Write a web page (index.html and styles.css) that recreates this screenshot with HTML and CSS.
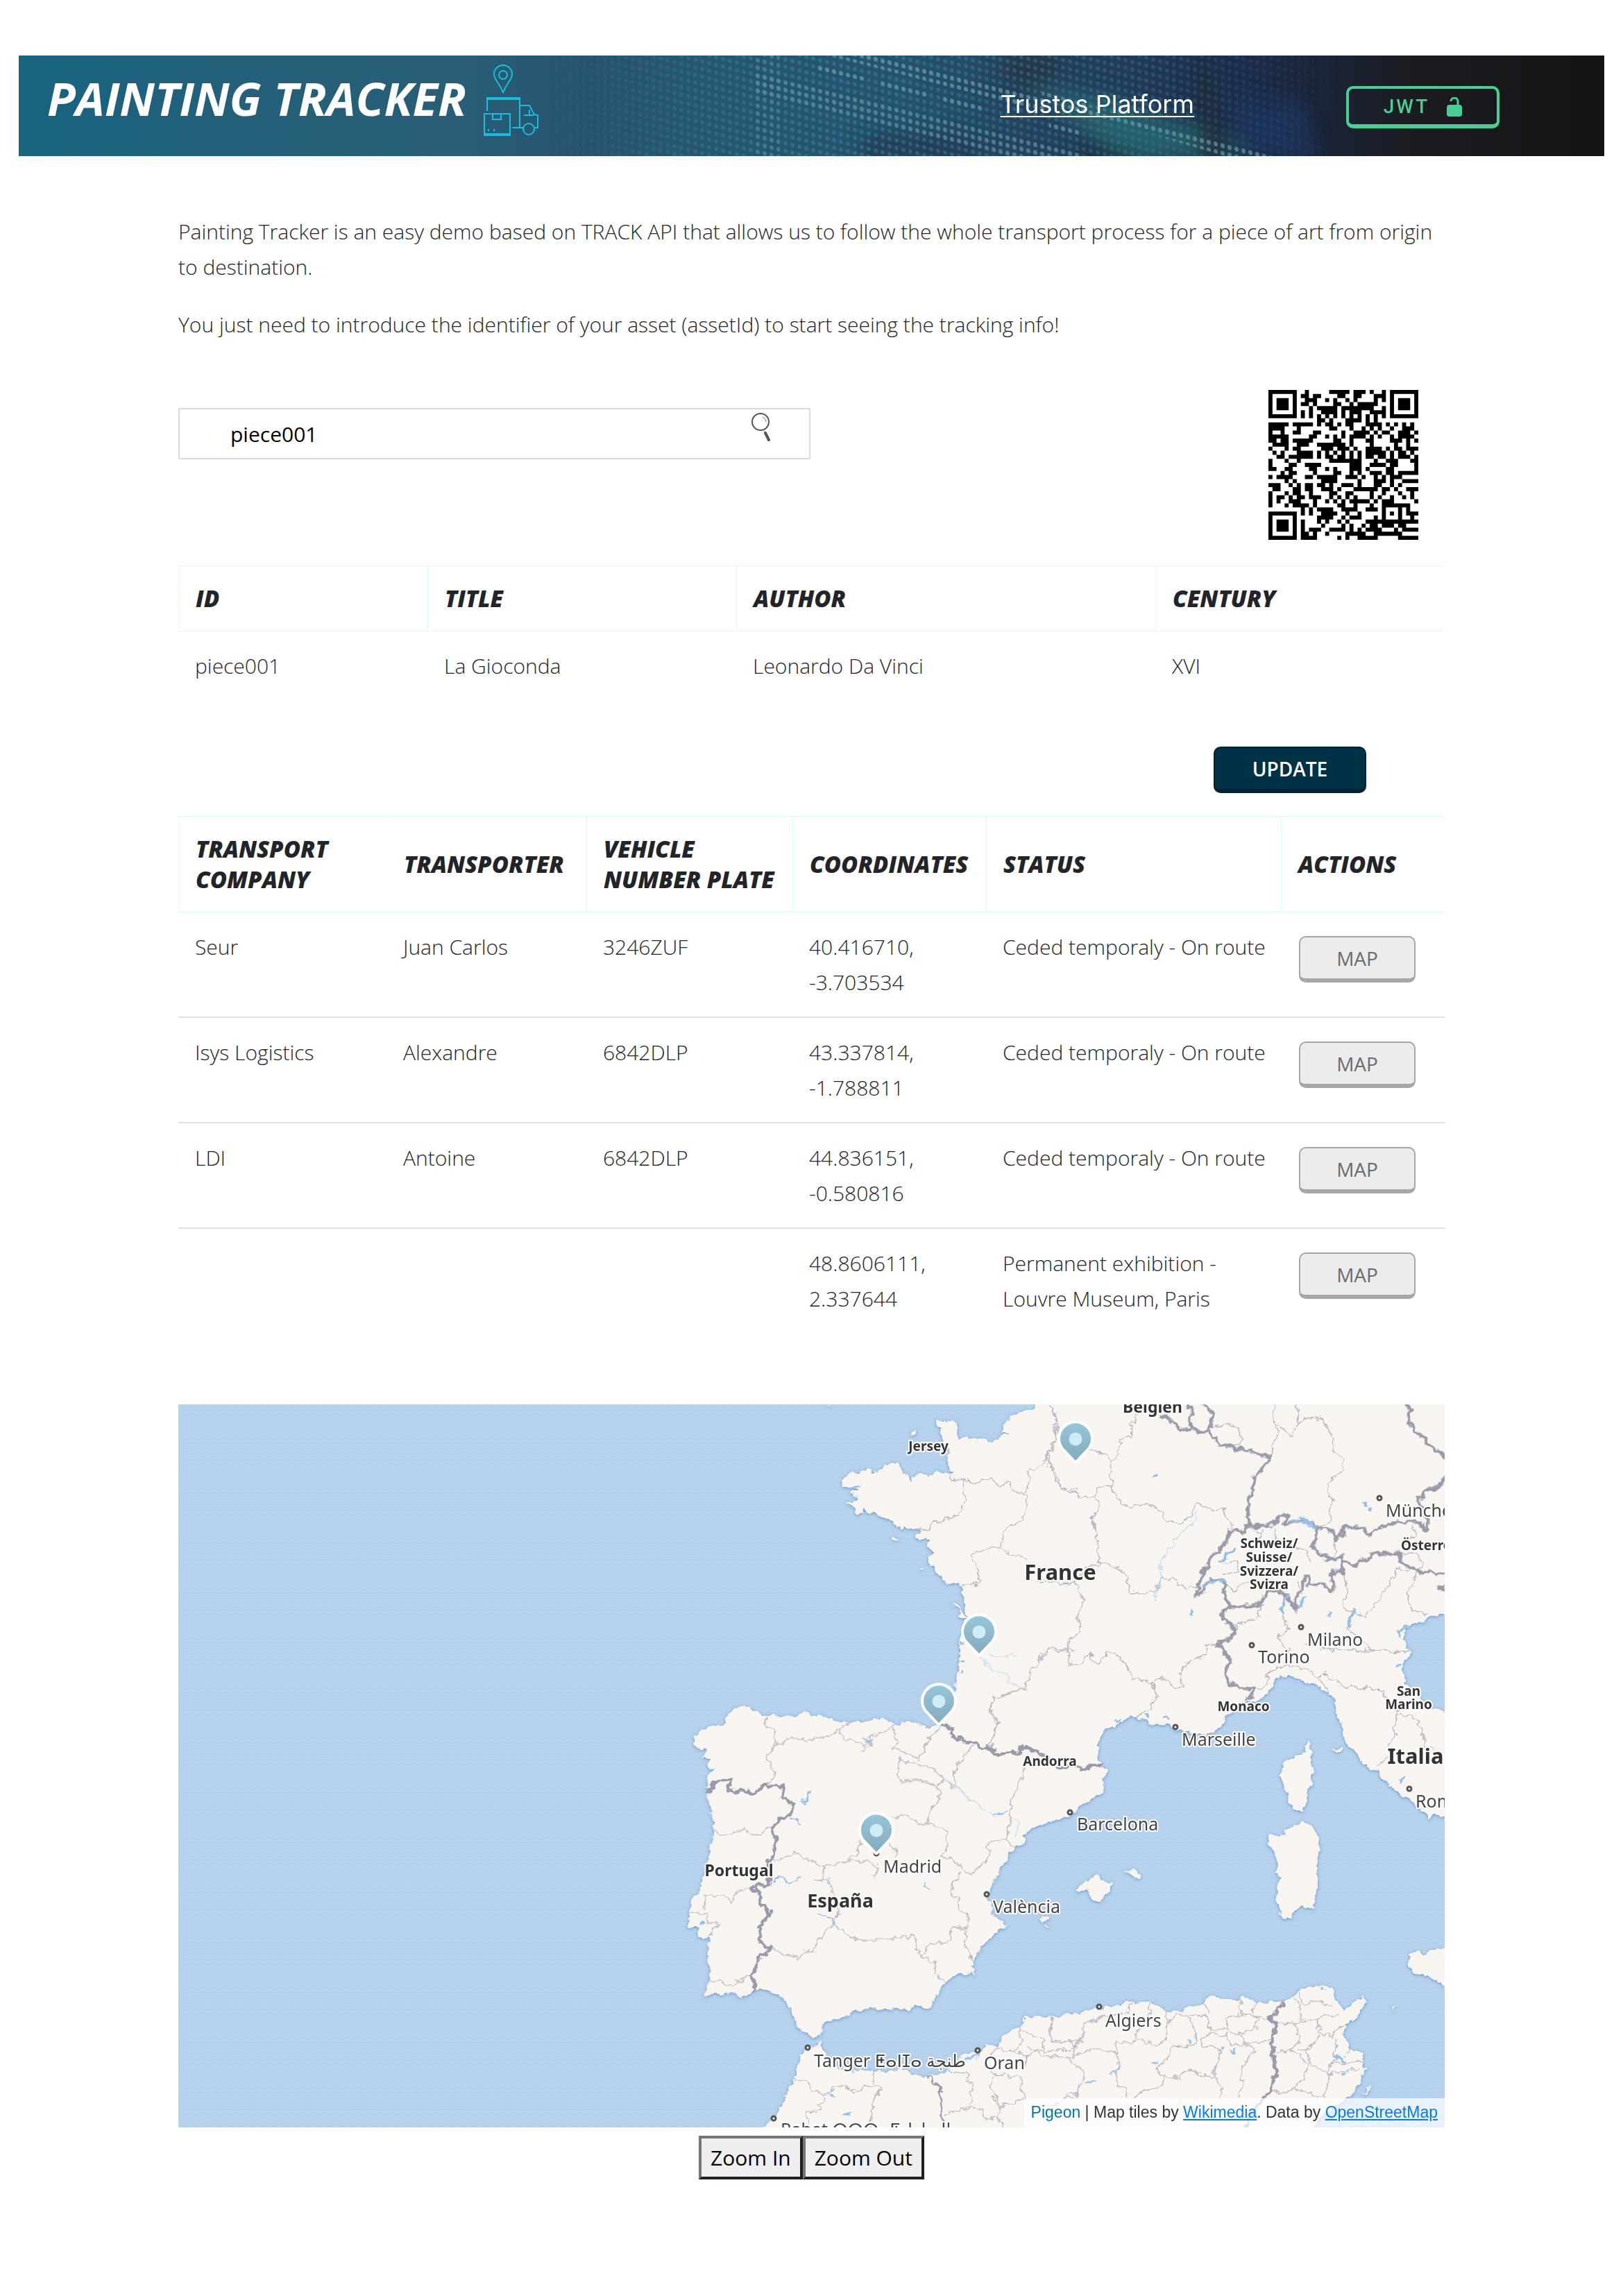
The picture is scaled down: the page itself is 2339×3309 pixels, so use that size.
FILE: index.html
```html
<!DOCTYPE html>
<html lang="en">
<head>
<meta charset="utf-8">
<title>Painting Tracker</title>
<link rel="stylesheet" href="styles.css">
</head>
<body>
<header class="topbar">
  <svg class="topbar-art" viewBox="0 0 2285 145" preserveAspectRatio="xMidYMid slice" aria-hidden="true">
    <defs>
      <linearGradient id="base"><stop offset="0" stop-color="#16647f"/><stop offset=".13" stop-color="#23607a"/><stop offset=".28" stop-color="#285e76"/><stop offset=".36" stop-color="#28536e"/><stop offset=".42" stop-color="#265772"/><stop offset=".56" stop-color="#25526f"/><stop offset=".63" stop-color="#264260"/><stop offset=".7" stop-color="#233a58"/><stop offset=".76" stop-color="#1e2f50"/><stop offset=".83" stop-color="#1b2234"/><stop offset=".88" stop-color="#1a1c20"/><stop offset="1" stop-color="#131415"/></linearGradient>
      <linearGradient id="fade"><stop offset=".32" stop-color="#000"/><stop offset=".48" stop-color="#bbb"/><stop offset=".7" stop-color="#777"/><stop offset=".84" stop-color="#000"/></linearGradient>
      <mask id="dotmask"><rect width="2285" height="145" fill="url(#fade)"/></mask>
      <pattern id="dots" width="10" height="11" patternUnits="userSpaceOnUse" patternTransform="skewY(14)"><rect x="2" y="2" width="6" height="6" rx="3" fill="#2f8598"/></pattern>
      <pattern id="bright" width="10" height="11" patternUnits="userSpaceOnUse" patternTransform="skewY(14)"><rect x="2" y="2" width="6" height="7" rx="3" fill="#6aa2a8"/></pattern>
      <filter id="soft" x="-20%" y="-50%" width="140%" height="200%"><feGaussianBlur stdDeviation="14"/></filter>
    </defs>
    <rect width="2285" height="145" fill="url(#base)"/>
    <g filter="url(#soft)">
      <path d="M1460 50L1560 60 1830 150 1600 150z" fill="#2b8580" opacity=".5"/>
      <path d="M1420 0h90l-30 50-60-10z" fill="#283443" opacity=".9"/>
      <path d="M1220 115l130 0 60 35h-200z" fill="#26344f" opacity=".8"/>
      <path d="M1530 115l120 40h-120z" fill="#232f45"/>
      <path d="M1690 0h30l30 150h-50z" fill="#23293a" opacity=".8"/>
      <path d="M1740 60l110 10 20 80h-110z" fill="#1e3158"/>
    </g>
    <rect width="2285" height="145" fill="url(#dots)" mask="url(#dotmask)" opacity=".85"/>
    <g fill="url(#bright)" opacity=".6">
      <path d="M1170 0h60l250 62v20z"/>
      <path d="M1060 26l420 100 50 10v14h-90l-380-92z" opacity=".8"/>
      <path d="M1150 12l70 16v9l-70-16zM1240 36l70 16v9l-70-16zM1330 58l60 15v9l-60-15zM1485 95l45 11v9l-45-11z"/>
      <path d="M1475 52l120 35 220 60h-70l-270-82z"/>
      <path d="M1062 0h34v145h-34z" opacity=".45"/>
    </g>
  </svg>
  <h1 class="brand">PAINTING TRACKER
    <svg class="brand-icon" viewBox="0 0 80 104" aria-hidden="true"><g fill="none" stroke="#16bfdf" stroke-width="2"><path d="M28 40C22 26 15 21 15 14a13 13 0 0 1 26 0c0 7-7 12-13 26z"/><circle cx="28" cy="15" r="6"/><path d="M5 67V48h47v43M5 50h47M52 59h14l7 13 5 1v18h-4M66 65v8M58 73h14M41 91h16"/><circle cx="65" cy="93" r="8"/><path d="M1 71h37v31H1zM1 100h37M13 71v8h12v-8"/><path d="M7 93v3M15 93v3"/></g></svg>
  </h1>
  <nav class="topnav">
    <a class="platform-link" href="#">Trustos Platform</a>
    <button class="btn btn-jwt" type="button">JWT
      <svg viewBox="0 0 22 28" aria-hidden="true"><rect y="11" width="22" height="17" rx="4" fill="#48cf93"/><path d="M6 6a5 5 0 0 1 10 0v7" fill="none" stroke="#48cf93" stroke-width="3"/></svg>
    </button>
  </nav>
</header>

<main class="content">
  <p>Painting Tracker is an easy demo based on TRACK API that allows us to follow the whole transport process for a piece of art from origin to destination.</p>
  <p>You just need to introduce the identifier of your asset (assetId) to start seeing the tracking info!</p>

  <div class="lookup">
    <form class="search">
      <input type="text" value="piece001" aria-label="Asset identifier">
      <button type="button" aria-label="Search"><svg viewBox="0 0 28 42" aria-hidden="true"><circle cx="14" cy="14" r="12" fill="none" stroke="#555" stroke-width="2"/><path d="M17 7q5 2 5 7M19 27l2 3" fill="none" stroke="#777" stroke-width="1"/><path d="M21 30l5 10" stroke="#555" stroke-width="4" stroke-linecap="round"/></svg></button>
    </form>
    <svg class="qr" viewBox="0 0 37 37" role="img" aria-label="QR code"><path id="qr-modules"/></svg>
  </div>

  <table class="grid piece">
    <colgroup><col class="c-id"><col class="c-title"><col class="c-author"><col></colgroup>
    <thead><tr><th>ID</th><th>TITLE</th><th>AUTHOR</th><th>CENTURY</th></tr></thead>
    <tbody><tr><td>piece001</td><td>La Gioconda</td><td>Leonardo Da Vinci</td><td>XVI</td></tr></tbody>
  </table>

  <div class="actions"><button class="btn btn-update" type="button">UPDATE</button></div>

  <table class="grid route">
    <colgroup><col class="c-company"><col class="c-transporter"><col class="c-plate"><col class="c-coords"><col class="c-status"><col></colgroup>
    <thead><tr><th>TRANSPORT COMPANY</th><th class="plain">TRANSPORTER</th><th>VEHICLE<br>NUMBER PLATE</th><th>COORDINATES</th><th>STATUS</th><th>ACTIONS</th></tr></thead>
    <tbody>
      <tr><td>Seur</td><td>Juan Carlos</td><td>3246ZUF</td><td>40.416710,<br>-3.703534</td><td>Ceded temporaly - On route</td><td><button class="btn btn-map" type="button">MAP</button></td></tr>
      <tr><td>Isys Logistics</td><td>Alexandre</td><td>6842DLP</td><td>43.337814,<br>-1.788811</td><td>Ceded temporaly - On route</td><td><button class="btn btn-map" type="button">MAP</button></td></tr>
      <tr><td>LDI</td><td>Antoine</td><td>6842DLP</td><td>44.836151,<br>-0.580816</td><td>Ceded temporaly - On route</td><td><button class="btn btn-map" type="button">MAP</button></td></tr>
      <tr><td></td><td></td><td></td><td>48.8606111,<br>2.337644</td><td>Permanent exhibition - Louvre Museum, Paris</td><td><button class="btn btn-map" type="button">MAP</button></td></tr>
    </tbody>
  </table>

  <section class="map" aria-label="Map">
    <svg class="map-tiles" viewBox="257 2024 1825 1042" preserveAspectRatio="xMidYMid slice">
      <defs>
        <pattern id="waves" width="16" height="9" patternUnits="userSpaceOnUse"><path d="M0 4q4-4 8 0t8 0" fill="none" stroke="#aecbe9" stroke-width="1"/></pattern>
        <filter id="coast" filterUnits="userSpaceOnUse" x="257" y="2024" width="1825" height="1042"><feTurbulence type="fractalNoise" baseFrequency=".09" numOctaves="3" seed="4" result="n"/><feDisplacementMap in="SourceGraphic" in2="n" scale="11" xChannelSelector="R" yChannelSelector="G" result="d"/><feDropShadow in="d" dx="0" dy="1" stdDeviation="2" flood-color="#5f93c6"/></filter>
        <filter id="rough" filterUnits="userSpaceOnUse" x="257" y="2024" width="1825" height="1042"><feTurbulence type="fractalNoise" baseFrequency=".09" numOctaves="3" seed="4" result="n"/><feDisplacementMap in="SourceGraphic" in2="n" scale="13" xChannelSelector="R" yChannelSelector="G"/></filter>
        <linearGradient id="pinfill" x2="0" y2="1"><stop offset="0" stop-color="#96c6d8"/><stop offset="1" stop-color="#82acbe"/></linearGradient>
        <g id="pin"><path d="M0 0L-18-19A22 22 0 1 1 18-19z" fill="url(#pinfill)" stroke="#fff" stroke-width="8" stroke-linejoin="round" paint-order="stroke"/><circle cy="-31" r="9.500" fill="#cdecf4"/></g>
      </defs>
      <rect x="257" y="2024" width="1825" height="1042" fill="#b6d2ed"/>
      <rect x="257" y="2024" width="1825" height="1042" fill="url(#waves)"/>
      <g fill="#f8f5f0" filter="url(#coast)">
        <!-- western France -->
        <path transform="translate(980 2020) scale(.35714 .33333)" d="M1460-20L1450 20 1390 40 1345 60 1310 85 1298 130 1332 138 1305 145 1285 165 1255 170 1220 160 1155 150 1132 158 1112 125 1122 95 1100 80 1070 90 1032 76 1042 100 1050 135 1065 165 1085 200 1080 240 1083 290 1105 308 1060 315 1040 300 1022 312 1005 322 985 312 960 312 932 340 912 318 890 290 880 260 850 268 815 280 812 300 780 310 755 295 720 305 680 315 655 335 655 372 700 370 720 385 680 395 715 410 715 425 665 437 700 450 710 485 735 480 742 460 770 480 820 500 870 530 900 545 955 550 970 565 952 575 965 595 1000 600 995 625 1022 650 1005 665 1005 695 1030 725 1050 760 1090 785 1135 800 1140 830 1150 870 1155 935 1140 960 1130 1060 1118 1200 1110 1300 1085 1360 1055 1400 1055 1520 1600 1520 1600-20zM932 134l20-10 4 10-15 8zM855 580l12 0 12 15-18 0zM588 12h14l-6 8zM1100 860l25 30 0 15-20-20zM1125 905l35 25-15 5-20-15zM970 714l12 2-2 8z"/>
        <!-- Iberia -->
        <path transform="translate(960 2420) scale(.40816 .35714)" d="M965 185L930 192 895 188 865 170 830 170 825 185 795 175 765 155 740 165 700 172 650 175 560 155 520 145 495 130 470 145 360 145 330 140 295 115 265 108 240 120 210 155 215 180 190 188 145 190 110 212 97 240 100 262 115 265 120 285 145 290 125 315 155 320 140 350 175 360 145 390 145 450 150 490 160 550 168 610 162 660 145 740 130 810 120 850 90 885 85 930 75 985 80 998 115 1000 110 1045 150 1042 150 1080 148 1120 152 1150 155 1210 145 1240 135 1280 180 1268 235 1270 260 1285 300 1262 315 1255 360 1253 400 1275 430 1310 435 1345 455 1365 460 1395 490 1430 525 1447 545 1428 555 1400 590 1372 630 1365 665 1335 740 1328 860 1335 880 1318 930 1328 960 1270 985 1222 1030 1192 1085 1185 1092 1170 1078 1160 1090 1130 1115 1075 1150 1035 1195 1000 1195 985 1165 965 1148 920 1132 870 1150 830 1180 765 1215 700 1240 675 1270 655 1258 635 1290 600 1370 570 1430 548 1480 500 1540 460 1550 420 1535 400 1555 375 1540 350 1525 340 1525 250 1545 210 1600 180 1600 0 1028 0 1010 120zM1315 968l35-15-3 22-20 2zM1335 995l20 5-15 6z"/>
        <!-- eastern France, the Alps and Italy -->
        <path transform="translate(1500 2020) scale(.3827 .35714)" d="M-20-20H1560V855L1480 865 1420 890 1375 915 1365 960 1390 1010 1380 1035 1362 1045 1365 1110 1385 1150 1430 1190 1470 1235 1560 1260V1690L1490 1665 1460 1680 1430 1645 1400 1620 1360 1595 1310 1545 1270 1490 1225 1475 1190 1415 1145 1380 1135 1310 1115 1260 1110 1200 1085 1175 1050 1155 985 1125 930 1105 890 1120 860 1170 830 1200 770 1215 700 1270 665 1330 600 1345 520 1330 465 1300 420 1300 385 1285 345 1265 300 1295 240 1325 220 1365 218 1440 245 1490 100 1500-20 1500zM1095 1405l40-10 0 15-25 4z"/>
        <!-- islands and North Africa -->
        <path transform="translate(1500 2500) scale(.3827 .36996)" d="M1005 20L1015 40 1015 90 1025 140 1020 180 1007 215 1000 265 985 303 960 285 930 262 935 240 910 205 918 190 905 160 915 110 960 85 995 70zM985 330L1020 350 1040 395 1055 445 1035 490 1042 530 1040 600 1025 680 990 665 960 675 940 715 910 712 885 650 890 590 900 555 885 545 890 480 870 435 855 430 862 385 895 395 930 375zM132 603L165 575 220 545 235 570 268 580 255 615 225 652 185 630 175 605 150 612zM312 530L350 525 375 555 368 562 335 545zM1385 880L1395 850 1425 840 1440 858 1490 832 1560 845V985L1520 975 1465 945 1410 930 1388 905zM1205 1395l25-10 8-18 2 15-15 15zM1320 1055l12 2-3 10zM-60 1100L60 1095 140 1085 200 1065 260 1065 320 1040 420 1045 470 1075 510 1083 560 1058 615 1050 625 1020 650 1018 665 1030 740 1035 750 1018 790 1030 810 1050 915 1035 950 1020 985 990 1050 970 1100 990 1105 1020 1120 1050 1140 1070 1185 1040 1213 1015 1220 1045 1185 1110 1145 1125 1140 1180 1165 1215 1210 1245 1212 1290 1222 1305 1205 1355 1170 1400 1120 1440 1060 1480 1000 1560H-60z"/>
        <path transform="translate(960 2880) scale(.3827 .33333)" d="M350 570L410 515 440 450 475 370 495 290 520 215 580 190 595 235 625 285 660 310 720 320 790 312 830 318 890 300 930 332 980 335 1040 325 1090 290 1125 235 1180 235 1205 195 1245 210 1275 150 1330 125 1380 90 1450 80 1540 65 1600 75V590H350z"/>
      </g>
      <g fill="none" stroke="#b8b4c0" stroke-width="4" stroke-linejoin="round" filter="url(#rough)">
        <path transform="translate(980 2020) scale(.35714 .33333)" d="M1085 320L1100 345 1130 335 1190 350 1255 330 1290 365 1330 350 1350 385 1400 405 1395 490 1360 530 1315 540 1295 625M1145 340L1150 440 1125 490 1060 510 1010 530 1000 555 960 560M1295 625L1215 645 1175 665 1200 720 1210 785 1140 800M1295 625L1330 665 1370 660 1395 690M1390 400L1410 360 1400 295 1470 275 1485 225 1515 180 1510 100 1515 60 1490 10M1485 225L1500 290 1530 340 1550 385 1600 380M1250 1490L1285 1390 1255 1330 1260 1280 1340 1265 1395 1240 1420 1160 1470 1100 1485 1060 1520 1080 1600 1070M1440 785L1600 780"/>
        <path transform="translate(960 2420) scale(.40816 .35714)" d="M350 148L345 175 375 210 385 262 355 325 385 370 365 430M385 262L440 240 500 245 580 230 610 205 650 175M610 205L625 240 680 255 700 285 725 270 720 230 780 210 800 180M725 250L690 265 700 285M800 195L820 260 800 275 850 300 890 320 910 300 920 250 970 190M820 315L815 400 840 415 900 405 960 435 980 400 940 365 890 340 850 335 820 315M980 400L1015 440 1020 360 1060 300 1085 260M960 435L965 480 930 530 930 580 990 620 990 680 970 710 1020 740 1075 790 1135 730 1140 650 1200 650M1140 275L1170 200 1145 130 1155 75 1270 45M1262 360L1245 430 1215 490 1215 560 1200 650 1230 680M930 580L900 590 870 560 835 550 790 555M790 660L808 690 808 720M690 655L670 710 640 730 600 745 555 755 500 730 450 695 400 730 380 735M640 730L710 735 755 760 730 795M555 755L555 800 580 830 595 870 610 940 590 995 535 1050 525 1095 490 1095 460 1125 400 1100 370 1080M590 995L670 1055 760 1050 875 1035 890 1110 945 1140 950 1190 985 1222M905 1110L940 1070 1000 1055 1010 1000 1065 1005 1070 960 1035 930 1030 885 1000 870 1010 830 1040 785M1060 1010L1055 1080 1085 1140M170 605L190 635 230 625 235 605 285 610 320 630 370 600M300 835L250 860 230 905 210 875 140 870 130 930M80 940L145 950 140 985 185 990 155 1030M155 1215L240 1230 300 1195"/>
        <path transform="translate(1500 2020) scale(.3827 .35714)" d="M30 10L60 60 55 160 20 210 40 290 85 350 150 385 205 385 215 345 265 340 265 240 225 200 180 200M265 240L295 210 300 150 340 140 345 90 365 50M265 340L285 385 330 430 410 415 450 440 465 480 525 495 560 460 590 415 690 440 715 490 730 520M205 385L225 420 195 470 215 560 220 650 290 665 325 710 335 770 430 770 450 710 500 715 545 755 590 750M220 655L180 665 130 725 160 800 140 870 150 920 110 960 100 1000 20 995-10 1050M100 1000L115 1065 150 1060 180 1015 210 1060 255 1010 310 1035 345 1120 410 1130 455 1115 500 1150 540 1155 520 1100 560 1050 625 1020 620 980 665 975M415 1130L440 1185 410 1240 365 1275M630 105L700 90 745 110 755 170 720 185M865 220L890 130 875 10M890 95L940 130 970 100 965 10M970 100L1000 65 1055 70 1090 120 1100 190 1135 230 1140 275 1085 330 1095 400 1090 480 1045 500M1105 560L1105 640M1140 690L1155 740 1140 840 1225 865 1310 740 1340 680 1400 680M1225 865L1165 850 1165 920 1250 1005 1370 1010M905 850L935 920 900 940 910 990 940 1000 930 1060 860 1090 840 1150 800 1160M930 1065L1000 1075 1045 1115 1070 1095 1130 1145 1240 1160 1290 1165 1300 1200 1350 1255 1330 1300 1330 1350 1310 1430 1260 1475M1045 1115L1085 1170M1350 1255L1410 1275 1430 1320 1450 1390 1500 1410M715 905L760 890 825 870 820 820M690 725L730 770 755 735 850 740M970 770L965 720M880 510L890 560 930 580 1000 600 1010 640M780 510L830 530 820 560M690 650L740 640 745 690 690 700M1460 860L1390 840 1380 780 1410 690M1350 610L1420 620 1440 650 1410 680M1400 495L1410 530 1350 590M1390 1010L1090 1000 1000 980"/>
        <path transform="translate(1500 2500) scale(.3827 .36996)" d="M340 1040L325 1085 270 1090 160 1125 155 1180 120 1230 125 1260 15 1250-50 1220M40 1100L35 1170 60 1200 155 1190M410 1045L415 1080 370 1150 345 1200 280 1195 285 1240 200 1220 120 1250M345 1200L370 1185 440 1215 480 1180 475 1120M470 1075L480 1120 520 1090 620 1090 640 1150 700 1150 700 1100 760 1090 850 1110M620 1050L635 1090M750 1020L755 1090M800 1050L790 1090M555 1095L580 1150 585 1205 490 1220 470 1270 440 1300 450 1330 520 1340 545 1305 640 1335 665 1270 680 1230 600 1205 625 1165 700 1170 715 1210 790 1210 805 1240 760 1275 755 1390 740 1420M700 1150L740 1170 810 1140 820 1100M745 1160L770 1205 865 1185M665 1270L650 1330 680 1375 675 1410M465 1330L455 1370 370 1395 350 1420M280 1200L295 1290 280 1310 290 1370 325 1375 325 1420M95 1260L165 1310 160 1350 130 1390 135 1410 80 1420M885 1120L960 1120 970 1200 940 1225 880 1240M960 1120L1040 1110 1055 1090 1125 1100M950 1025L970 1050 985 1110M970 1005L985 1050 1040 1040 1100 1060M1040 1110L1050 1160 1095 1175 1140 1130M1050 1170L1000 1230 970 1225M1000 1230L1020 1290 1080 1315 1105 1270 1110 1180M940 1225L1005 1280 990 1340 950 1375 905 1400 870 1385M1080 1320L1200 1300M1090 1320L1070 1410M950 1375L1060 1415M1105 1280L1210 1270M1150 1250L1170 1220"/>
        <path transform="translate(960 2880) scale(.3827 .33333)" d="M480 350L530 355 545 390 600 420 620 390 660 380 700 400 780 375 780 310M600 430L570 460 580 490 530 490 540 560M780 375L808 380 775 470 770 560M1060 315L1135 325 1155 400 1140 470 1055 500M1120 485L1190 470 1210 530 1250 510 1270 560M1245 210L1200 290 1240 330 1340 340 1330 390 1360 440 1260 465 1215 370 1230 335M1230 420L1255 470 1250 510M1240 215L1310 230 1335 200 1340 120M1310 230L1360 250 1420 220 1415 180 1345 140M1455 80L1450 180 1530 190 1540 220 1420 230M1360 250L1350 300M1555 370L1545 400 1450 470"/>
      </g>
      <g fill="none" stroke="#9c99aa" stroke-width="13" stroke-linejoin="round" filter="url(#rough)">
        <path transform="translate(960 2420) scale(.40816 .35714)" d="M970 185L1010 195 1010 235 1090 260 1120 280 1140 275 1170 300 1250 298 1255 270 1300 290 1340 305 1400 360 1430 345 1470 365 1510 345 1540 345M145 455L180 415 225 400 225 455 260 445 310 458 345 430 410 432 415 485 455 500 435 545 400 565 375 600 385 640 380 720 360 740 365 830 300 835 325 870 335 910 365 940 330 1000 328 1040 350 1085 370 1080 360 1110 335 1115 305 1190 315 1258"/>
        <path transform="translate(1500 2020) scale(.3827 .35714)" d="M440 55L480 65 520 110 570 110 590 125 630 118 655 150 680 185 720 180 735 195 765 185 790 205 860 220 835 270 805 310 790 370 780 440 780 500 765 530 710 520 705 550 670 605 640 625 630 660 605 700 595 750 580 780 615 770 620 740 650 715 690 725 690 770 715 830 688 840 690 880 730 915 720 950 665 975 690 1010 715 1050 695 1090 710 1130 750 1155 798 1160 795 1180 772 1210M550 0L570 50 560 80 572 108M600 0L648 50 630 115M780 500L830 505 880 490 900 460 935 470 910 495 1000 480 1045 510 1025 560 1030 600 1100 640 1135 620 1135 690 1095 690 1100 760 1050 740 1010 735 1010 710 990 715 985 760 960 800 960 840 930 790 890 765 850 760 845 800 810 820 715 830M1045 510L1100 520 1110 555 1135 540 1140 505 1210 510 1235 535 1290 500 1350 485 1425 490 1455 520 1460 480 1430 440 1420 395 1440 370 1500 340 1525 300M1135 640L1190 660 1215 640 1250 620 1345 605 1360 645 1400 680 1540 700M1380 0L1395 35 1380 65 1410 120 1470 180 1530 230M1530 730L1505 745 1510 765 1530 770"/>
        <path transform="translate(1500 2500) scale(.3827 .36996)" d="M915 1035L905 1060 885 1080 855 1105 885 1120 868 1190 880 1300 890 1305 865 1380 820 1440 780 1500 775 1540"/>
        <path transform="translate(960 2880) scale(.3827 .33333)" stroke-width="9" d="M980 335L1035 395 1030 420 1040 480 1048 570"/>
      </g>
      <g fill="none" stroke="#93c0ea" stroke-width="10" filter="url(#rough)">
        <path transform="translate(1500 2020) scale(.3827 .35714)" d="M610 755L630 725 695 722M945 480L990 490 1045 512M965 460L1020 495M665 650L735 595M905 850L910 815 935 780M1185 835L1160 880 1160 910M970 835L1000 780M1090 850V870M565 845V870M425 300h15M1220 405v20M1240 425v20M1350 950L1355 920 1390 900M1340 1070h18M285 1295L300 1285M395 1268h18M465 1275l20 10M1335 1340h14M1350 1523h12"/>
        <path transform="translate(1500 2020) scale(.3827 .35714)" stroke="#bfdaf2" stroke-width="4" d="M585 440L590 480 545 510 510 560 480 600 450 650 450 710 430 800"/>
        <path transform="translate(960 2420) scale(.40816 .35714)" stroke-width="6" d="M700 245h30M510 450L480 500M440 555L475 585M380 820L400 800 440 825 480 805M525 812L555 805M910 815L930 850M535 945L590 965 590 995M1160 555L1200 535M125 975v15M150 1035h15"/>
        <path transform="translate(960 2420) scale(.40816 .35714)" stroke="#bfdaf2" stroke-width="4" d="M980 400L1060 470 1130 530 1160 555M1225 560L1245 580 1230 650"/>
        <path transform="translate(1500 2500) scale(.3827 .36996)" d="M1055 985L1070 995M1112 1215L1120 1200M1105 1250L1150 1270M1135 1325L1155 1315M260 1325L300 1295M165 1360L210 1345M420 1275h25M555 1198h10M680 1218h12M712 1235h24"/>
        <path transform="translate(960 2880) scale(.3827 .33333)" d="M1125 262L1180 250M615 410L640 430M665 497L690 503"/>
        <path transform="translate(980 2020) scale(.35714 .33333)" d="M1130 1130h20M1135 1160v15M1140 1040v10M675 375L720 365"/>
        <path transform="translate(980 2020) scale(.35714 .33333)" stroke="#bfdaf2" stroke-width="4" d="M1240 1080L1270 1100 1360 1100M1210 1100L1255 1155 1320 1180 1330 1215 1400 1245"/>
      </g>
      <g fill="#fff" stroke="#555" stroke-width="3"><circle cx="1988" cy="2159" r="3"/><circle cx="1875" cy="2345" r="3"/><circle cx="1804" cy="2371" r="3"/><circle cx="1694" cy="2489" r="3"/><circle cx="2031" cy="2578" r="3"/><circle cx="1542" cy="2612" r="3"/><circle cx="1263" cy="2671" r="3"/><circle cx="1422" cy="2730" r="3"/><circle cx="1584" cy="2892" r="3"/><circle cx="1164" cy="2951" r="3"/><circle cx="1409" cy="2955" r="3"/><circle cx="1115" cy="3053" r="3"/></g>
      <g class="city"><text x="1997" y="2186">München</text><text x="1884" y="2372">Milano</text><text x="1813" y="2397">Torino</text><text x="1703" y="2516">Marseille</text><text x="2040" y="2605">Roma</text><text x="1552" y="2638">Barcelona</text><text x="1273" y="2699">Madrid</text><text x="1431" y="2757">València</text><text x="1593" y="2921">Algiers</text><text x="1173" y="2979">Tanger ⵟⴰⵏⵊⴰ طنجة</text><text x="1418" y="2982">Oran</text><text x="1125" y="3078">Rabat ⵕⵕⴱⴰⵟ الرباط</text></g>
      <g class="small-country"><text x="1338" y="2091">Jersey</text><text x="1513" y="2545">Andorra</text><text x="1829" y="2231">Schweiz/</text><text x="1829" y="2251">Suisse/</text><text x="1829" y="2271">Svizzera/</text><text x="1829" y="2290">Svizra</text><text x="1792" y="2466">Monaco</text><text x="2030" y="2444">San</text><text x="2030" y="2463">Marino</text><text x="2069" y="2234">Österreich</text></g>
      <g class="mid-country"><text x="1661" y="2036">Belgien</text><text x="1065" y="2704">Portugal</text></g>
      <g class="country"><text x="1528" y="2277">France</text><text x="1211" y="2749" class="espana">España</text><text x="2040" y="2542">Italia</text></g>
      <use href="#pin" x="1550" y="2105"/><use href="#pin" x="1411" y="2383"/><use href="#pin" x="1353" y="2483"/><use href="#pin" x="1263" y="2669"/>
    </svg>
    <div class="attribution"><a class="pigeon" href="#">Pigeon</a> | Map tiles by <a href="#">Wikimedia</a>. Data by <a href="#">OpenStreetMap</a></div>
  </section>
  <div class="zoom"><button type="button">Zoom In</button><button type="button">Zoom Out</button></div>
</main>
<script src="qr.js"></script>
</body>
</html>
```
FILE: qr.js
```js
// Dark modules of the code, one entry per row, as column ranges.
const rows = [
  "0-6,9,15-19,21-23,25,28,30-36", "0,6,8,9,11,12,17,18,21,22,26-28,30,36", "0,2-4,6,9-11,14,16,19,21,26,28,30,32-34,36",
  "0,2-4,6,8,9,11,16,17,20,22-26,30,32-34,36", "0,2-4,6,10,12-16,18-25,28,30,32-34,36", "0,6,8,10,13-16,18,20-22,25-28,30,36",
  "0-6,8,10,12,14,16,18,20,22,24,26,28,30-36", "12,13,15,19-22,24,26", "0-4,6-10,12,14,15,17,19,20,24-27,29,31,33,35",
  "0-3,7,15,16,20,23,25,27,30,33-35", "0,3,6,7,11,12,18,21-24,26,28,29,32-34,36", "0-4,10,11,14,16,18,20-23,25,27,30,32-35",
  "0,1,3,4,6-10,16,17,20,24,25,30-32,34,36", "1-4,7-9,12-18,20,25,31,34", "0,4,6,7,13-15,17-19,21,24-27,29,31,32,34-36",
  "1,3,7-10,12,14,16,18,20,22,24-28,30,32,33,35", "2,3,5-10,12,14,15,17,18,20,22,24,25,27,28,30,32-34,36", "0,4,7,15-22,26,29-31,35,36",
  "0,5,6,9-12,20-22,25-28,30,31,36", "0,1,4,5,10,11,14,16,20-22,24,29,30,36", "3,5,6,11,16,17,20,22,25-27,29,30,32-36",
  "0,2-5,9,10,12-16,19-21,23,26,28,30-32", "4,6,13-16,22,26-28,30,33-36", "0-2,5,7,9,10,12,13,15,18-20,22,26,27,30,32",
  "1,2,6,7,9,10,13-15,17,21-26,28,29,31,34-36", "0,4,6,7,10,15,16,19,20,25,28,32,35", "0,2,3,5,7,8,10-12,15,17,19,21,25,27,30,33,35",
  "0,2,5-7,11,14,16,18,20-24,26,28-30,36", "0,4,6-9,11,17,18,21,25,28-34", "8,10,12-15,18-21,24-26,28,32,34",
  "0-6,8,10,13-16,19,22,28,30,32,34-36", "0,6,12-15,18,20-22,26,28,32,35", "0,2-4,6,8,12,14,17,19,24-36",
  "0,2-4,6,8,13,18,20,23,25,26,28-30,32,33", "0,2-4,6,8,10-12,15-18,20,22,24-27,31,33-36", "0,6,8,9,11,14,19-23,26-32",
  "0-6,8-11,17,19,22-26,32-36"
];
document.getElementById("qr-modules").setAttribute("d", rows.map((row, y) =>
  row.split(",").map(run => {
    const [a, b = a] = run.split("-").map(Number);
    return `M${a} ${y}h${b - a + 1}v1h-${b - a + 1}z`;
  }).join("")).join(""));
```
FILE: styles.css
```css
* { box-sizing: border-box; }
body {
  margin: 0;
  padding: 80px 27px 168px;
  background: #fff;
  color: #212529;
  font-family: "Open Sans", "Noto Sans", sans-serif;
  font-size: 30px;
  font-weight: 300;
  line-height: 51px;
}
button, input { font-family: inherit; }

.topbar {
  position: relative;
  display: flex;
  align-items: center;
  justify-content: space-between;
  min-height: 145px;
  padding: 0 151px 0 41px;
  overflow: hidden;
  background: #1b2b44;
}
.topbar-art { position: absolute; inset: 0; width: 100%; height: 100%; }
.brand {
  position: relative;
  display: flex;
  align-items: center;
  gap: 25px;
  margin: 0;
  padding-bottom: 24px;
  color: #fff;
  font-size: 67px;
  font-style: italic;
  font-weight: 700;
  line-height: 80px;
}
.brand-icon { width: 80px; height: 104px; margin-top: 8px; }
.topnav { position: relative; display: flex; align-items: center; gap: 219px; }
.platform-link {
  margin-bottom: 6px;
  color: #fff;
  font: 400 36px/44px Inter, sans-serif;
  text-decoration-thickness: 2px;
  text-underline-offset: 4px;
}

.btn { border-style: solid; border-radius: 10px; font-size: 28px; line-height: 38px; text-align: center; }
.btn-jwt {
  display: flex;
  align-items: center;
  justify-content: center;
  gap: 25px;
  width: 221px;
  height: 61px;
  margin-top: 4px;
  border-width: 4px 4px 6px;
  border-color: #48cf93;
  background: transparent;
  color: #48cf93;
  font-family: Roboto, sans-serif;
  font-weight: 500;
  letter-spacing: 3px;
}
.btn-jwt svg { width: 22px; height: 28px; }
.btn-update {
  width: 220px;
  height: 67px;
  border-width: 2px 2px 6px;
  border-color: #00222f;
  background: #003245;
  color: #fff;
  font-weight: 600;
}
.btn-map {
  display: block;
  width: 168px;
  height: 67px;
  margin: 10px 0 0 2px;
  border-width: 2px 2px 6px;
  border-color: #a6a6a6;
  background: #ececec;
  color: #6b6b6b;
  font-weight: 400;
}

.content { padding: 83px 230px 0; }
.content p { margin: 0 0 32px; }

.lookup { display: flex; align-items: flex-start; justify-content: space-between; padding: 37px 38px 37px 0; }
.search { display: flex; width: 51%; height: 74px; margin-top: 26px; border: 2px solid #dcdcdc; }
.search input { flex: 1; min-width: 0; padding: 0 0 0 73px; border: 0; background: none; color: #000; font-size: 30px; font-weight: 400; }
.search button { align-self: flex-start; padding: 4px 56px 0 0; border: 0; background: none; }
.search svg { display: block; width: 28px; height: 42px; }
.qr { width: 216px; height: 216px; }

.grid { width: 100%; border-collapse: separate; border-spacing: 0; table-layout: fixed; }
.grid th {
  padding: 25px 0 24px 24px;
  border: solid #dcfafb;
  border-width: 1px 0 1px 1px;
  font-size: 33px;
  font-style: italic;
  font-weight: 800;
  line-height: 44px;
  text-align: left;
}
.grid th.plain { border-left-color: transparent; }
.grid td { padding: 24px 0 24px 24px; vertical-align: top; }
.c-id { width: 359px; }
.c-title { width: 445px; }
.c-author { width: 604px; }
.c-company { width: 300px; }
.c-transporter { width: 288px; }
.c-plate { width: 297px; }
.c-coords { width: 279px; }
.c-status { width: 425px; }
.route tbody tr:not(:last-child) td { border-bottom: 2px solid #dee2e6; }
.actions { display: flex; justify-content: flex-end; padding: 67px 113px 33px 0; }

.map { position: relative; height: 1042px; margin-top: 103px; overflow: hidden; }
.map-tiles { display: block; width: 100%; height: 100%; }
.map text { fill: #333; stroke: #fff; stroke-width: 4px; stroke-linejoin: round; paint-order: stroke; font-family: "Noto Sans", "DejaVu Sans", sans-serif; }
.city text { fill: #444; font-size: 25px; font-weight: 400; }
.country text { font-size: 31px; font-weight: 700; text-anchor: middle; }
.country .espana { font-size: 27px; }
.mid-country text { font-size: 23px; font-weight: 700; text-anchor: middle; }
.small-country text { font-size: 19px; font-weight: 700; text-anchor: middle; }
.attribution {
  position: absolute;
  right: 0;
  bottom: 0;
  padding: 2px 10px 4px;
  background: rgba(255, 255, 255, .7);
  color: #333;
  font: 400 23px/36px "Liberation Sans", sans-serif;
}
.attribution a { color: #007bff; }
.attribution .pigeon { color: #0078a8; text-decoration: none; }

.zoom { display: flex; justify-content: center; padding-top: 12px; }
.zoom button {
  height: 63px;
  padding: 0 13px;
  border: 4px solid;
  border-color: #767676 #1d2125 #1d2125 #767676;
  background: #efefef;
  color: #000;
  font-size: 30px;
  font-weight: 400;
}
```
